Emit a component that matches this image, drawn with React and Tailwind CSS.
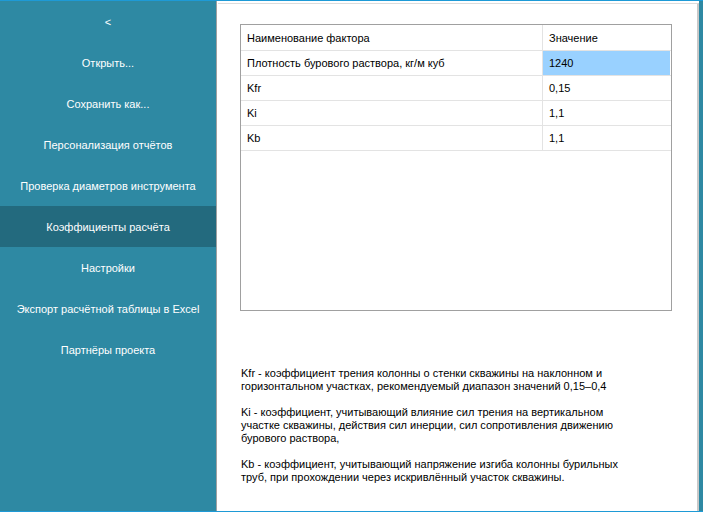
import React from 'react';

const MENU = [
  '<',
  'Открыть...',
  'Сохранить как...',
  'Персонализация отчётов',
  'Проверка диаметров инструмента',
  'Коэффициенты расчёта',
  'Настройки',
  'Экспорт расчётной таблицы в Excel',
  'Партнёры проекта',
];

const ROWS = [
  { name: 'Плотность бурового раствора, кг/м куб', value: '1240', selected: true },
  { name: 'Kfr', value: '0,15' },
  { name: 'Ki', value: '1,1' },
  { name: 'Kb', value: '1,1' },
];

function Sidebar() {
  return (
    <div className="flex w-[217px] shrink-0 flex-col border-r border-[#a0a0a0] bg-[#2e89a3]">
      {MENU.map((item, index) => (
        <div
          key={item}
          className={
            index === 5
              ? 'flex h-[41px] items-center justify-center bg-[#236a7e] pt-[2px] text-white'
              : 'flex h-[41px] items-center justify-center pt-[2px] text-white'
          }
        >
          {item}
        </div>
      ))}
    </div>
  );
}

function FactorTable() {
  return (
    <div className="h-[287px] w-[432px] border border-[#a0a0a0] bg-white">
      <div className="flex h-[26px] border-b border-[#e3e3e3]">
        <div className="flex w-[302px] items-center border-r border-[#e3e3e3] pl-[6px] pt-[1px]">Наименование фактора</div>
        <div className="flex flex-1 items-center pl-[6px] pt-[1px]">Значение</div>
      </div>
      {ROWS.map((row) => (
        <div key={row.name} className="flex h-[25px] border-b border-[#e3e3e3]">
          <div className="flex w-[302px] items-center border-r border-[#e3e3e3] pl-[6px] pt-[1px]">{row.name}</div>
          <div
            className={
              row.selected
                ? 'mr-[1px] flex flex-1 items-center bg-[#99d1ff] pl-[6px] pt-[1px]'
                : 'flex flex-1 items-center pl-[6px] pt-[1px]'
            }
          >
            {row.value}
          </div>
        </div>
      ))}
    </div>
  );
}

export default function App() {
  return (
    <div className="flex h-[512px] w-[703px] flex-col border-y border-[#1e9ad6] bg-white font-['Liberation_Sans',Tahoma,sans-serif] text-[11px] text-black">
      <div className="flex flex-1">
        <Sidebar />
        <div className="flex flex-1 flex-col bg-white pl-[1px] pt-[2px]">
          <div className="flex flex-1 flex-col border-r-2 border-t border-r-[#c8c8c8] border-t-[#dcdcdc] pl-[22px] pt-[20px]">
            <FactorTable />
            <div className="mt-[56px] flex flex-col gap-[13px] pl-[1px] leading-[13px]">
              <p>
                Kfr - коэффициент трения колонны о стенки скважины на наклонном и
                <br />
                горизонтальном участках, рекомендуемый диапазон значений 0,15–0,4
              </p>
              <p>
                Ki - коэффициент, учитывающий влияние сил трения на вертикальном
                <br />
                участке скважины, действия сил инерции, сил сопротивления движению
                <br />
                бурового раствора,
              </p>
              <p>
                Kb - коэффициент, учитывающий напряжение изгиба колонны бурильных
                <br />
                труб, при прохождении через искривлённый участок скважины.
              </p>
            </div>
          </div>
        </div>
        <div className="w-[4px] shrink-0 bg-[#2e89a3]" />
      </div>
    </div>
  );
}
